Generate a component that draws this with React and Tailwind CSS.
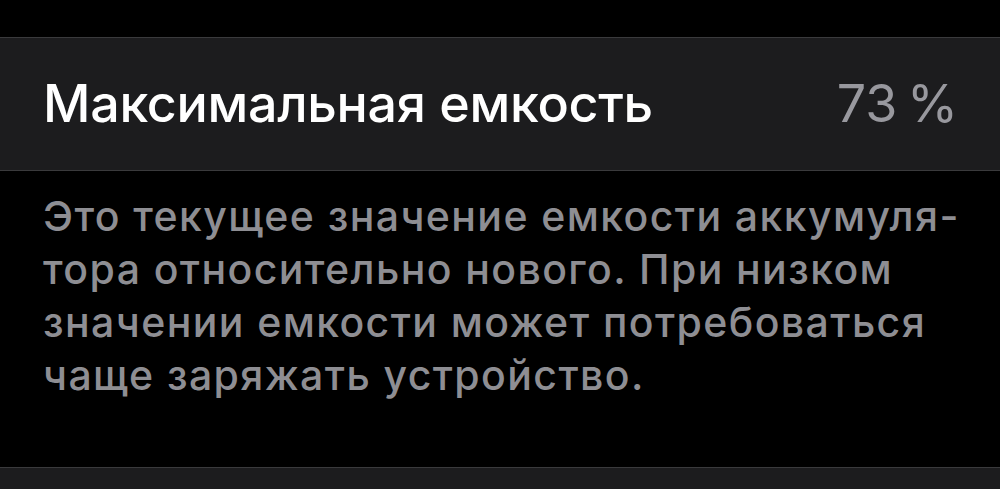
import React from "react";

const footerLines = [
  "Это текущее значение емкости аккумуля-",
  "тора относительно нового. При низком",
  "значении емкости может потребоваться",
  "чаще заряжать устройство.",
];

const App = () => {
  return (
    <div className="h-[489px] w-full overflow-hidden bg-black font-['Inter','Noto_Sans',sans-serif] antialiased">
      <div className="h-[37px]" />

      <div className="flex h-[134px] items-center justify-between border-y border-[#3a3a3c] bg-[#1c1c1e] pl-[43px] pr-[42px]">
        <span className="text-[52px] font-medium tracking-[-0.3px] text-white">
          Максимальная емкость
        </span>
        <span className="text-[52px] font-normal text-[#98989e]">73{"\u2009"}%</span>
      </div>

      <div className="px-[43px] pt-[19px] text-[41px] font-medium leading-[53px] tracking-[1.4px] text-[#8e8e93]">
        {footerLines.map((line) => (
          <div key={line} className="whitespace-nowrap">
            {line}
          </div>
        ))}
      </div>

      <div className="mt-[65px] h-[40px] border-t border-[#3a3a3c] bg-[#1c1c1e]" />
    </div>
  );
};

export default App;
